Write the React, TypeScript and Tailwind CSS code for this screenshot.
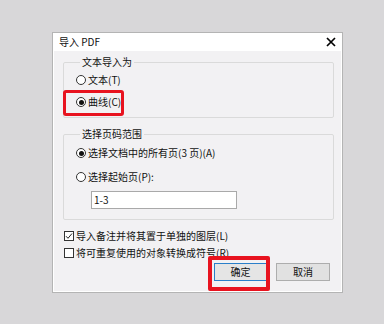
import React from "react";

const Radio = ({ checked }: { checked?: boolean }) => (
  <span className="w-[10px] h-[10px] rounded-full border border-[#333333] bg-white flex items-center justify-center shrink-0">
    {checked && <span className="w-[5px] h-[5px] rounded-full bg-[#111111]" />}
  </span>
);

const Check = ({ checked }: { checked?: boolean }) => (
  <span className="w-[10px] h-[10px] border border-[#333333] bg-white flex items-center justify-center shrink-0">
    {checked && (
      <svg width="8" height="8" viewBox="0 0 8 8">
        <path d="M1 4.2 L3 6.3 L7 1.5" fill="none" stroke="#222" strokeWidth="1" />
      </svg>
    )}
  </span>
);

export default function App() {
  return (
    <div className="relative w-[384px] h-[324px] bg-[#d8d7d9] pt-[32px] pl-[52px] font-['Noto_Sans_CJK_SC',sans-serif] text-[10px] leading-[14px] text-[#111111]">
      <div className="w-[291px] h-[261px] border border-[#b4b4b4] bg-white flex flex-col">
        <div className="h-[18px] flex items-center justify-between pl-[6px] pr-[6px] shrink-0">
          <span>导入 PDF</span>
          <svg width="10" height="10" viewBox="0 0 10 10">
            <path d="M1 1 L9 9 M9 1 L1 9" stroke="#000" strokeWidth="1.7" />
          </svg>
        </div>
        <div className="flex-1 mx-[1px] mb-[1px] bg-[#f2f1f3] flex flex-col pl-[9px] pr-[7px]">
          <fieldset className="mt-[4px] border border-[#dadada] rounded-[2px] pl-[12px] pt-[4px] pb-[8px] flex flex-col gap-[8px]">
            <legend className="ml-[4px] px-[2px]">文本导入为</legend>
            <label className="flex items-center gap-[2px] h-[14px]">
              <Radio />
              <span>文本(T)</span>
            </label>
            <label className="flex items-center gap-[2px] h-[14px]">
              <Radio checked />
              <span>曲线(C)</span>
            </label>
          </fieldset>
          <fieldset className="mt-[9px] border border-[#dadada] rounded-[2px] pl-[12px] pt-[5px] pb-[10px] flex flex-col">
            <legend className="ml-[4px] px-[2px]">选择页码范围</legend>
            <label className="flex items-center gap-[2px] h-[14px]">
              <Radio checked />
              <span>选择文档中的所有页(3 页)(A)</span>
            </label>
            <label className="flex items-center gap-[2px] h-[14px] mt-[10px]">
              <Radio />
              <span>选择起始页(P):</span>
            </label>
            <div className="mt-[7px] ml-[15px] w-[146px] h-[18px] border border-[#a9a9a9] bg-white flex items-center pl-[2px]">
              1-3
            </div>
          </fieldset>
          <label className="mt-[9px] flex items-center gap-[2px] h-[14px] pl-[1px]">
            <Check checked />
            <span>导入备注并将其置于单独的图层(L)</span>
          </label>
          <label className="mt-[3px] flex items-center gap-[2px] h-[14px] pl-[1px]">
            <Check />
            <span>将可重复使用的对象转换成符号(R)</span>
          </label>
          <div className="mt-[3px] flex justify-end gap-[9px] pr-[4px]">
            <button className="w-[53px] h-[18px] border border-[#2a7fc9] bg-[#e5e5e5] flex items-center justify-center">
              确定
            </button>
            <button className="w-[54px] h-[18px] border border-[#adadad] bg-[#e1e1e1] flex items-center justify-center">
              取消
            </button>
          </div>
        </div>
      </div>
      <div className="absolute left-[63px] top-[90px] w-[61px] h-[26px] border-[3px] border-[#e8131f] rounded-[3px]" />
      <div className="absolute left-[208px] top-[256px] w-[62px] h-[35px] border-[4px] border-[#e8131f] rounded-[2px]" />
    </div>
  );
}
